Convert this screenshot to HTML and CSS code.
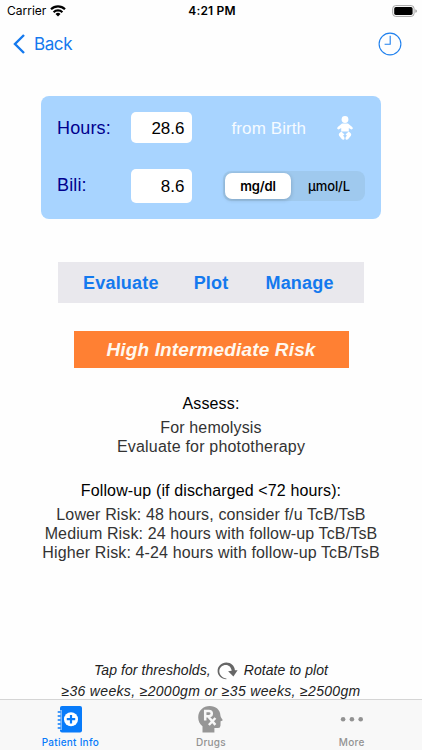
FILE: index.html
```html
<!DOCTYPE html>
<html lang="en">
<head>
<meta charset="utf-8">
<title>Bilirubin</title>
<link rel="stylesheet" href="styles.css">
</head>
<body>
<div class="screen">
  <header class="status">
    <div class="carrier"><span>Carrier</span>
      <svg width="16" height="12" viewBox="0 0 16 12" fill="none" stroke="#000" stroke-width="2.2"><path d="M1 4.3a10 10 0 0 1 14 0M3.6 7.2a6.3 6.3 0 0 1 8.8 0"/><path d="M8 11.5 5.5 9a3.6 3.6 0 0 1 5 0z" fill="#000" stroke="none"/></svg>
    </div>
    <time class="time">4:21 PM</time>
    <svg class="battery" width="26" height="12" viewBox="0 0 26 12"><rect x=".7" y=".6" width="21.4" height="10.8" rx="3" fill="#fff" stroke="#a5a5a5"/><rect x="2.2" y="2.1" width="18.4" height="7.8" rx="1.6"/><path d="M23.4 4.2q1.5.4 1.5 1.8t-1.5 1.8z" fill="#999"/></svg>
  </header>
  <nav class="navbar">
    <a class="back"><svg width="13" height="20" viewBox="0 0 13 20" fill="none" stroke="#1479ee" stroke-width="2.4"><path d="M11 1 2 10l9 9"/></svg><span>Back</span></a>
    <svg class="clock" width="24" height="24" viewBox="0 0 24 24" fill="none" stroke="#1f80ee" stroke-width="1.1"><circle cx="12" cy="12" r="10.9"/><path d="M12.2 3.8v8.4H6.6"/></svg>
  </nav>
  <main>
    <section class="panel">
      <div class="row">
        <label>Hours:</label><div class="field hours">28.6</div>
        <span class="birth">from Birth</span>
        <svg class="baby" width="16" height="24" viewBox="0 0 16 24" fill="#fff"><circle cx="8" cy="3.5" r="3.4"/><path d="M5 7.4h6l4.2 3.6q1.1 1.2.2 2.1-.9.8-2 0l-1.6-1.2v3.6H4.2v-3.6l-1.6 1.2q-1.1.8-2 0-.9-.9.2-2.1z"/><path d="M4.3 15.6 7.5 18.4l-1.4 1.2 1.3 1.9q.6 1.8-.8 2.3-1 .2-1.8-.7l-2.7-3.4q-.8-1.5.2-2.5zM11.7 15.6 8.5 18.4l1.4 1.2-1.3 1.9q-.6 1.8.8 2.3 1 .2 1.8-.7l2.7-3.4q.8-1.5-.2-2.5z"/></svg>
      </div>
      <div class="row second">
        <label>Bili:</label><div class="field bili">8.6</div>
        <div class="segments"><span class="seg on">mg/dl</span><span class="seg off">µmol/L</span></div>
      </div>
    </section>
    <div class="actions"><a class="evaluate">Evaluate</a><a class="plot">Plot</a><a class="manage">Manage</a></div>
    <div class="risk"><span>High Intermediate Risk</span></div>
    <section class="advice">
      <h2 class="assess">Assess:</h2>
      <p class="hemo">For hemolysis</p>
      <p class="photo">Evaluate for phototherapy</p>
      <h2 class="follow">Follow-up (if discharged &lt;72 hours):</h2>
      <p class="lower">Lower Risk: 48 hours, consider f/u TcB/TsB</p>
      <p class="medium">Medium Risk: 24 hours with follow-up TcB/TsB</p>
      <p class="higher">Higher Risk: 4-24 hours with follow-up TcB/TsB</p>
    </section>
    <section class="notes">
      <p class="tap"><span>Tap for thresholds,</span><svg width="21" height="18" viewBox="0 0 21 18"><path d="M9.4 17.2C4.4 17.2.6 13.6.6 9 .6 4.2 4.6.6 9.2.6c4.8 0 8.4 3.4 8.7 7.6h2.7l-4.2 6.2-5.3-5.2 3.6-.5C14.200 5.500 12 3.100 8.900 3.100 5.300 3.100 2.300 5.700 2.300 9.300c0 3.700 3.200 6.700 7.100 7.200z" fill="#666"/></svg><span>Rotate to plot</span></p>
      <p class="weeks">≥36 weeks, ≥2000gm or ≥35 weeks, ≥2500gm</p>
    </section>
  </main>
  <footer class="tabs">
    <a class="tab active"><svg width="26" height="27" viewBox="0 0 26 27"><path d="M5 0h18q2 0 2 2v22.5q0 2-2 2H5q-2 0-2-2V2q0-2 2-2z" fill="#087bfa"/><path d="M0 6h5M0 10h5M0 14h5M0 18h5M0 22h5" stroke="#f8f8f8" stroke-width="3"/><path d="M.7 6h4M.7 10h4M.7 14h4M.7 18h4M.7 22h4" stroke="#087bfa" stroke-width="1.6"/><circle cx="14" cy="13.2" r="7" fill="#fff"/><path d="M14 9v8.4M9.8 13.2h8.4" stroke="#087bfa" stroke-width="2.2"/></svg><span>Patient Info</span></a>
    <a class="tab"><svg width="25" height="27" viewBox="0 0 25 27"><path d="M4.5 26.5v-6.2C1.8 18.2.2 15 .2 11.5.2 4.7 5.3 0 11.700 0c6 0 10.500 3.800 10.700 9.200.1 1.500.7 2.600 2 4.200.7 1-.2 1.700-1.800 1.900l-.1 4.200q-.1 2.500-2.400 2.500h-3.700v4.500z" fill="#969696"/><g fill="none" stroke="#f8f8f8" stroke-width="2.500"><path d="M7.200 14.600V5h3.600q3 0 3 2.600t-3 2.600H7.200M10 10.200l7.400 8.700M17.400 12l-6.500 7"/></g></svg><span>Drugs</span></a>
    <a class="tab"><svg width="24" height="27" viewBox="0 0 24 27" fill="#929292"><circle cx="3.1" cy="13.3" r="2.3"/><circle cx="11.9" cy="13.3" r="2.3"/><circle cx="20.7" cy="13.3" r="2.3"/></svg><span>More</span></a>
  </footer>
</div>
</body>
</html>
```
FILE: styles.css
```css
* { box-sizing: border-box; }
body { margin: 0; background: #fff; font-family: "Liberation Sans", Arial, sans-serif; color: #000; }
.screen { width: 422px; height: 750px; display: flex; flex-direction: column; overflow: hidden; background: #fefefe; }
svg { display: block; flex: none; }
p, h2 { margin: 0; white-space: nowrap; font-weight: 400; }
.status { height: 22px; flex: none; display: grid; grid-template-columns: 1fr auto 1fr; align-items: center; padding: 0 4px 0 7px; font: 12px/22px Inter, sans-serif; }
.carrier { display: flex; align-items: center; gap: 4px; }
.time { font-weight: 600; font-size: 12px; letter-spacing: .2px; margin-right: 1px; }
.battery { justify-self: end; }
.navbar { height: 43px; flex: none; display: flex; justify-content: space-between; align-items: center; padding: 0 20px 0 13px; }
.back { display: flex; align-items: center; gap: 8px; color: #1479ee; font: 17px/22px Inter, sans-serif; letter-spacing: -.4px; }
main { flex: 1; min-height: 0; display: flex; flex-direction: column; align-items: center; padding-top: 31px; }
.panel { width: 340px; height: 123px; flex: none; border-radius: 8px; background: #a8d4ff; padding: 16px 16px 0; }
.row { height: 31px; display: flex; align-items: center; }
.second { height: 35px; margin-top: 25px; }
label { width: 74px; padding-top: 2px; font-size: 18px; letter-spacing: .15px; color: #00008e; }
.second label { padding-top: 0; }
.field { width: 61px; height: 31px; border-radius: 5px; background: #fff; display: flex; align-items: center; justify-content: flex-end; padding: 2px 7.5px 0 0; font-size: 17px; }
.bili { height: 34px; }
.birth { width: 105px; margin-left: 39.5px; padding-top: 2px; font-size: 17px; letter-spacing: .1px; color: #f6fbff; }
.segments { width: 142px; height: 30px; margin-left: 31px; border-radius: 8px; background: #9fc9ee; display: flex; padding: 2px; }
.seg { flex: 1; display: flex; align-items: center; justify-content: center; border-radius: 7px; font: 500 13px/26px Inter, sans-serif; letter-spacing: -.1px; }
.on { flex: 0 0 66px; background: #fff; box-shadow: 0 1px 4px #0003; font-weight: 600; letter-spacing: -.2px; }
.off { padding-left: 4px; }
.actions { width: 306px; height: 41px; margin-top: 43px; flex: none; background: #e9e8ed; display: flex; align-items: center; padding: 1px 0 0 25px; color: #1479ee; font-size: 18px; font-weight: 700; letter-spacing: .2px; }
.plot { margin-left: 35px; }
.manage { margin-left: 37px; }
.risk { width: 275px; height: 37px; margin-top: 28px; flex: none; background: #ff8033; color: #fff8ee; font: italic 700 19px/37px "Liberation Sans", sans-serif; letter-spacing: .15px; text-align: center; }
.advice { height: 170px; margin-top: 26px; flex: none; text-align: center; font-size: 16px; line-height: 19px; letter-spacing: .13px; color: #333; }
.advice h2 { font-size: 16px; line-height: 20px; color: #000; }
.hemo { margin-top: 4px; }
.photo { letter-spacing: .2px; }
.follow { margin-top: 25px; }
.lower { margin-top: 4px; }
.notes { margin-top: 96px; flex: none; text-align: center; font-size: 14px; font-style: italic; line-height: 21px; color: #222; }
.tap { display: flex; justify-content: center; align-items: center; gap: 6px; letter-spacing: .07px; }
.weeks { letter-spacing: .33px; }
.tabs { height: 51px; flex: none; border-top: 1px solid #d5d5d5; background: #f8f8f8; display: grid; grid-template-columns: repeat(3, 1fr); }
.tab { display: flex; flex-direction: column; align-items: center; padding-top: 6px; color: #929292; font: 500 10px/12px Inter, sans-serif; letter-spacing: .25px; }
.tab span { margin-top: 3px; }
.active { color: #087bfa; }
```
